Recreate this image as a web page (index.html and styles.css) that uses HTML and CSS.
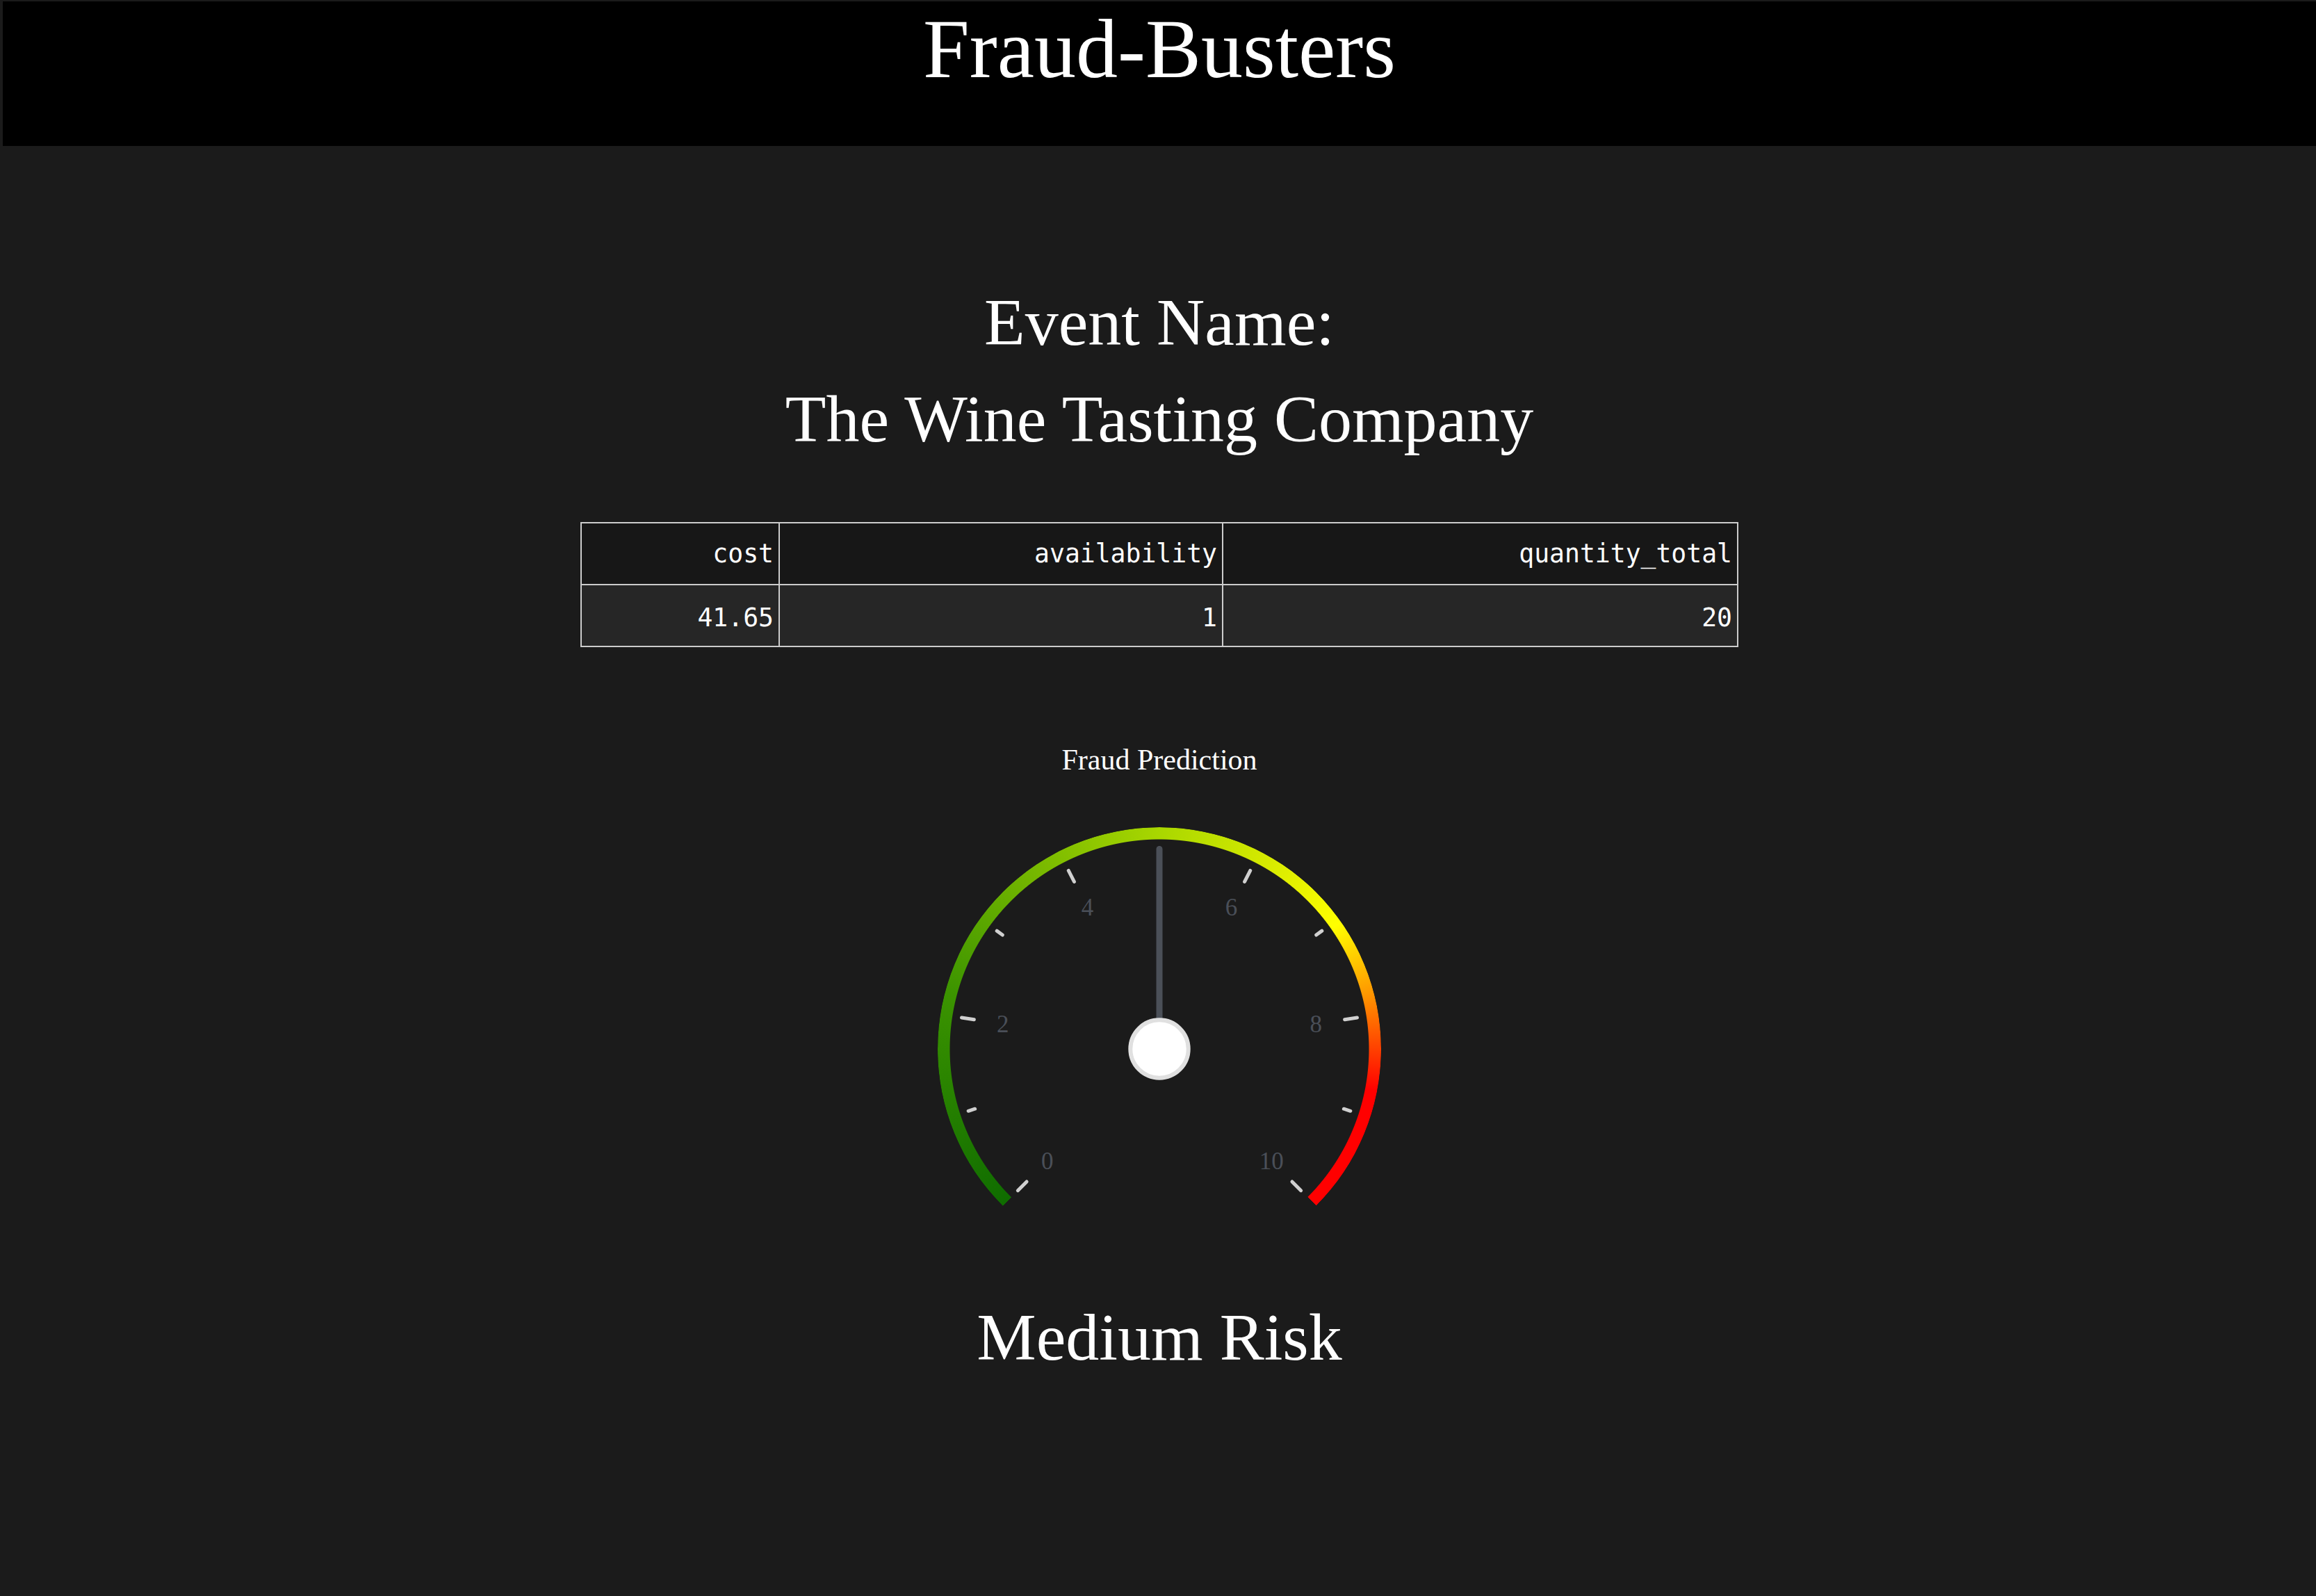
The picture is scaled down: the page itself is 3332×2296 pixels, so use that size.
FILE: index.html
```html
<!DOCTYPE html>
<html lang="en">
<head>
<meta charset="utf-8">
<title>Fraud-Busters</title>
<link rel="stylesheet" href="styles.css">
</head>
<body>
<header class="topbar">
  <h1 class="brand">Fraud-Busters</h1>
</header>
<main class="content">
  <h2 class="event-label">Event Name:</h2>
  <h2 class="event-name">The Wine Tasting Company</h2>
  <table class="stats">
    <colgroup>
      <col class="col-cost">
      <col class="col-avail">
      <col class="col-qty">
    </colgroup>
    <thead>
      <tr><th>cost</th><th>availability</th><th>quantity_total</th></tr>
    </thead>
    <tbody>
      <tr><td>41.65</td><td>1</td><td>20</td></tr>
    </tbody>
  </table>
  <section class="gauge-section">
    <div class="gauge-title">Fraud Prediction</div>
    <div class="gauge">
      <div class="gauge-arc"></div>
      <svg class="gauge-svg" width="700" height="600" viewBox="0 0 700 600">
        <g class="ticks">
          <line class="tick-major" x1="350" y1="52" x2="350" y2="70" transform="rotate(-135 350 340)"/>
          <line class="tick-minor" x1="350" y1="51" x2="350" y2="61" transform="rotate(-108 350 340)"/>
          <line class="tick-major" x1="350" y1="52" x2="350" y2="70" transform="rotate(-81 350 340)"/>
          <line class="tick-minor" x1="350" y1="51" x2="350" y2="61" transform="rotate(-54 350 340)"/>
          <line class="tick-major" x1="350" y1="52" x2="350" y2="70" transform="rotate(-27 350 340)"/>
          <line class="tick-minor" x1="350" y1="51" x2="350" y2="61" transform="rotate(0 350 340)"/>
          <line class="tick-major" x1="350" y1="52" x2="350" y2="70" transform="rotate(27 350 340)"/>
          <line class="tick-minor" x1="350" y1="51" x2="350" y2="61" transform="rotate(54 350 340)"/>
          <line class="tick-major" x1="350" y1="52" x2="350" y2="70" transform="rotate(81 350 340)"/>
          <line class="tick-minor" x1="350" y1="51" x2="350" y2="61" transform="rotate(108 350 340)"/>
          <line class="tick-major" x1="350" y1="52" x2="350" y2="70" transform="rotate(135 350 340)"/>
        </g>
        <g class="labels">
          <text x="188.8" y="501.2">0</text>
          <text x="124.8" y="304.3">2</text>
          <text x="246.5" y="136.9">4</text>
          <text x="453.5" y="136.9">6</text>
          <text x="575.2" y="304.3">8</text>
          <text x="511.2" y="501.2">10</text>
        </g>
        <line class="needle" x1="350" y1="340" x2="350" y2="52.5"/>
        <circle class="knob" cx="350" cy="340" r="41.7"/>
      </svg>
    </div>
  </section>
  <h2 class="risk">Medium Risk</h2>
</main>
</body>
</html>
```

FILE: styles.css
```css
html, body {
  margin: 0;
  background: #1b1b1b;
}

body {
  padding: 2px 0 0 4px;
  color: #ffffff;
  font-family: "Liberation Serif", "Times New Roman", serif;
}

.topbar {
  height: 208px;
  background: #000000;
  text-align: center;
}

.brand {
  margin: 0;
  padding-top: 9px;
  font-size: 120px;
  line-height: 120px;
  font-weight: normal;
}

.content {
  display: flex;
  flex-direction: column;
  align-items: center;
}

.event-label,
.event-name,
.risk {
  margin: 0;
  font-size: 96px;
  line-height: 96px;
  font-weight: normal;
}

.event-label {
  margin-top: 206px;
}

.event-name {
  margin-top: 43px;
}

.stats {
  margin-top: 100px;
  width: 1664px;
  table-layout: fixed;
  border-collapse: collapse;
  border: 2px solid #cccccc;
  font-family: "DejaVu Sans Mono", "Liberation Mono", monospace;
  font-size: 36.4px;
}

.col-cost { width: 285px; }
.col-avail { width: 638px; }
.col-qty { width: 741px; }

.stats th,
.stats td {
  height: 87px;
  padding: 0 7px;
  text-align: right;
  vertical-align: middle;
  font-weight: normal;
  border: 2px solid #cccccc;
  color: #ffffff;
}

.stats th {
  background: #171717;
}

.stats td {
  height: 81px;
  padding-top: 6px;
  background: #262626;
}

.gauge-section {
  display: flex;
  flex-direction: column;
  align-items: center;
}

.gauge-title {
  margin-top: 141px;
  font-size: 42px;
  line-height: 42px;
}

.gauge {
  position: relative;
  margin-top: 55px;
  width: 700px;
  height: 600px;
}

.gauge-arc {
  position: absolute;
  left: 31px;
  top: 21px;
  width: 638px;
  height: 638px;
  border-radius: 50%;
  background: conic-gradient(from 225deg,
    #0f6c00 0deg,
    #3c9400 60deg,
    #a9d700 135deg,
    #d6ea00 165deg,
    #ffff00 190deg,
    #ff9800 210deg,
    #ff0000 236deg,
    #ff0000 270deg,
    transparent 270deg);
  -webkit-mask: radial-gradient(circle, transparent 301px, #000 302px);
  mask: radial-gradient(circle, transparent 301px, #000 302px);
}

.gauge-svg {
  position: absolute;
  left: 0;
  top: 0;
  overflow: visible;
}

.tick-major,
.tick-minor {
  stroke: #d0d0d0;
  stroke-width: 5;
  stroke-linecap: round;
}

.labels text {
  fill: #4a4f58;
  font-family: "Liberation Serif", "Times New Roman", serif;
  font-size: 35px;
  text-anchor: middle;
  dominant-baseline: central;
}

.needle {
  stroke: #4b5058;
  stroke-width: 9;
  stroke-linecap: round;
}

.knob {
  fill: #ffffff;
  stroke: #e0e0e0;
  stroke-width: 6;
}

.risk {
  margin-top: 107px;
}
```
